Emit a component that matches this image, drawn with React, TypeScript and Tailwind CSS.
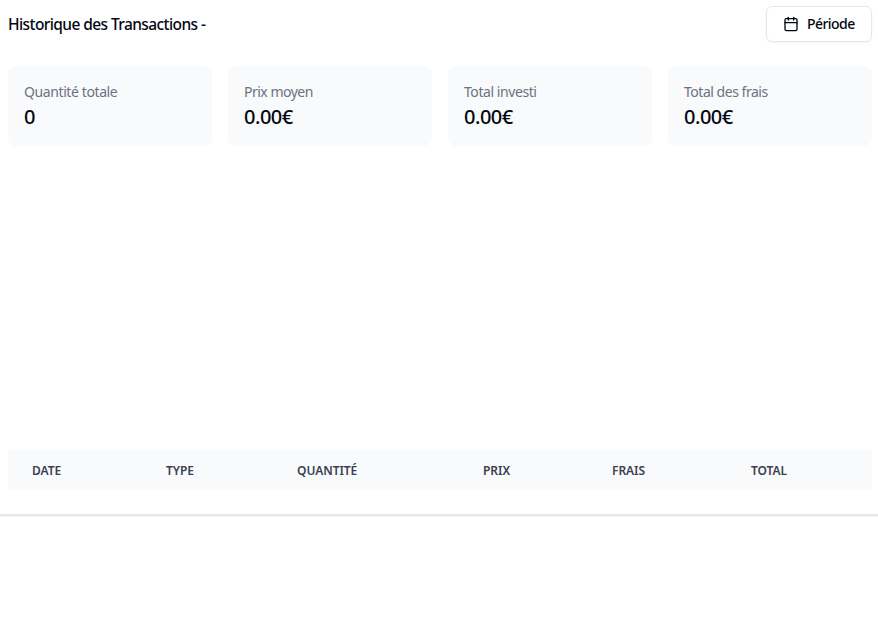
import React from "react";
import { Calendar } from "lucide-react";

const stats = [
  { label: "Quantité totale", value: "0", tracking: "tracking-[-0.4px]" },
  { label: "Prix moyen", value: "0.00€", tracking: "tracking-[-0.5px]" },
  { label: "Total investi", value: "0.00€", tracking: "tracking-[-0.43px]" },
  { label: "Total des frais", value: "0.00€", tracking: "tracking-[-0.47px]" },
];

const columns = [
  { label: "Date", width: "w-[134px]" },
  { label: "Type", width: "w-[131px]" },
  { label: "Quantité", width: "w-[186px]" },
  { label: "Prix", width: "w-[129px]" },
  { label: "Frais", width: "w-[139px]" },
  { label: "Total", width: "w-[145px]" },
];

export default function App() {
  return (
    <div className="h-[620px] bg-white font-['Noto_Sans','Open_Sans',sans-serif] text-[#030712]">
      <section className="h-[514px] bg-white pt-1.5 pr-1.5 pl-2 shadow-[0_1px_0_#e6e6e6,0_2px_0_#e6e6e6,0_3px_0_#f6f6f6]">
        <header className="flex h-9 items-center justify-between">
          <h1 className="text-[15.5px] leading-6 font-[550] tracking-[-0.59px]">Historique des Transactions -</h1>
          <button className="flex h-9 w-[106px] items-center gap-2 rounded-md border border-gray-200 px-4 text-sm font-[550] shadow-xs">
            <Calendar className="size-4 shrink-0" />
            <span className="tracking-[-0.55px]">Période</span>
          </button>
        </header>
        <div className="mt-6 grid grid-cols-4 gap-4">
          {stats.map((s) => (
            <div key={s.label} className="h-20 rounded-lg bg-gray-50 p-4">
              <p className={`text-sm leading-5 text-[#6b7280] ${s.tracking}`}>{s.label}</p>
              <p className="pt-px text-xl leading-7 font-[550] tracking-[-0.5px]">{s.value}</p>
            </div>
          ))}
        </div>
        <table className="mt-[304px] w-full table-fixed text-left">
          <thead className="bg-gray-50">
            <tr className="h-10">
              {columns.map((c) => (
                <th key={c.label} className={`${c.width} pt-0.5 pl-6 text-xs font-semibold tracking-[-0.05px] text-[#374151] uppercase`}>
                  {c.label}
                </th>
              ))}
            </tr>
          </thead>
        </table>
      </section>
    </div>
  );
}
